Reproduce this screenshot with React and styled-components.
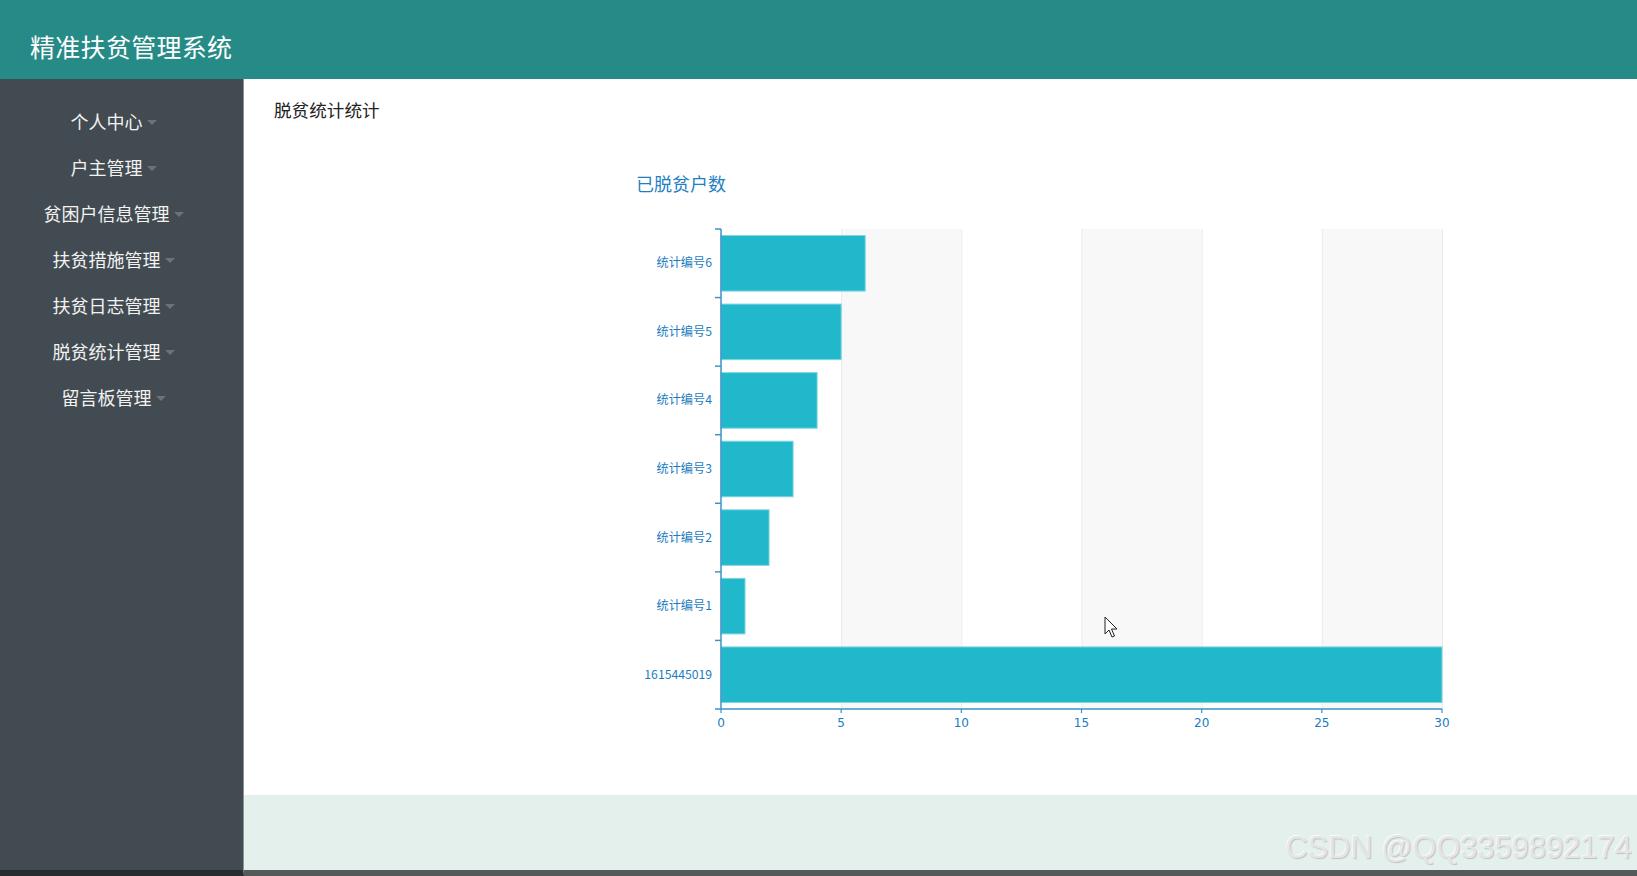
import React from "react";
import styled, { createGlobalStyle } from "styled-components";

const GlobalStyle = createGlobalStyle`
  html, body {
    margin: 0;
    padding: 0;
    overflow: hidden;
  }
  body {
    font-family: "Noto Sans CJK SC", "Noto Sans", sans-serif;
  }
`;

const Page = styled.div`
  width: 100vw;
  height: 100vh;
  display: grid;
  grid-template-rows: 79px 1fr;
`;

const Header = styled.header`
  background: #268a87;
  display: flex;
  align-items: center;
  padding: 12px 0 0 30px;
`;

const Brand = styled.h1`
  margin: 0;
  font-size: 25px;
  font-weight: 400;
  color: #fff;
  letter-spacing: 0.3px;
`;

const Body = styled.div`
  display: grid;
  grid-template-columns: 244px 1fr;
  min-height: 0;
`;

const Sidebar = styled.nav`
  background: #414b51;
  border-bottom: 6px solid #272c2f;
  border-right: 1px solid #8a9396;
  padding: 19px 16px 0 0;
  display: flex;
  flex-direction: column;
`;

const MenuItem = styled.div`
  height: 46px;
  display: flex;
  align-items: center;
  justify-content: center;
  gap: 4px;
  font-size: 18px;
  color: #f2f2f2;
`;

const Caret = styled.span`
  width: 0;
  height: 0;
  border-left: 5px solid transparent;
  border-right: 5px solid transparent;
  border-top: 5px solid #6a7378;
  margin-top: 2px;
`;

const Main = styled.main`
  display: flex;
  flex-direction: column;
  min-height: 0;
`;

const Content = styled.section`
  flex: 1;
  background: #fff;
  padding: 19px 0 0 30px;
`;

const PageTitle = styled.div`
  font-size: 17.6px;
  color: #222;
  line-height: 24px;
`;

const ChartBox = styled.div`
  margin: 49px 0 0 326px;
  width: 900px;
`;

const ChartTitle = styled.div`
  padding-left: 36px;
  font-size: 18px;
  line-height: 24px;
  color: #1f7fc4;
`;

const Footer = styled.footer`
  height: 75px;
  background: #e4f0ec;
  border-bottom: 6px solid #56595a;
  position: relative;
`;

const Watermark = styled.div`
  position: absolute;
  right: 5px;
  bottom: 5px;
  font-family: "Liberation Sans", Arial, sans-serif;
  font-size: 30.5px;
  color: #e4e6e6;
  text-shadow: 1px 1px 1px #bfc2c2, -1px -1px 0 #fafafa;
  letter-spacing: 0.2px;
`;

const menu = [
  "个人中心",
  "户主管理",
  "贫困户信息管理",
  "扶贫措施管理",
  "扶贫日志管理",
  "脱贫统计管理",
  "留言板管理",
];

const data = [
  { name: "统计编号6", value: 6 },
  { name: "统计编号5", value: 5 },
  { name: "统计编号4", value: 4 },
  { name: "统计编号3", value: 3 },
  { name: "统计编号2", value: 2 },
  { name: "统计编号1", value: 1 },
  { name: "1615445019", value: 30 },
];

// plot geometry inside the svg
const X0 = 121;
const X1 = 842;
const Y0 = 29;
const Y1 = 509;
const MAX = 30;
const AXIS = "#3c93c9";
const LABEL = "#1a7cc0";

function BarChart() {
  const band = (Y1 - Y0) / data.length;
  const sx = (v) => X0 + ((X1 - X0) * v) / MAX;
  const ticks = [0, 5, 10, 15, 20, 25, 30];

  return (
    <svg width="900" height="540" style={{ display: "block", marginTop: 5 }}>
      {ticks.slice(0, -1).map((t, i) =>
        i % 2 === 1 ? (
          <rect key={"bg" + t} x={sx(t)} y={Y0} width={sx(5) - X0} height={Y1 - Y0} fill="#f8f8f8" />
        ) : null
      )}
      {ticks.slice(1).map((t) => (
        <line key={"g" + t} x1={sx(t) + 0.5} x2={sx(t) + 0.5} y1={Y0} y2={Y1} stroke="#ebebeb" />
      ))}
      {data.map((d, i) => {
        const top = Y0 + band * i + 6.5;
        const h = band - 13;
        return (
          <g key={d.name}>
            <rect x={X0} y={top} width={sx(d.value) - X0} height={h} fill="#22b8cb" stroke="#7fd6e2" strokeWidth="1" />
            <text x={112} y={Y0 + band * i + band / 2 + 4} textAnchor="end" fontSize="12.2" fill={LABEL}
              fontFamily='"Noto Sans CJK SC", "DejaVu Sans", sans-serif'>
              {d.name}
            </text>
          </g>
        );
      })}
      {data.map((d, i) => (
        <line key={"yt" + i} x1={X0 - 6} x2={X0} y1={Y0 + band * i} y2={Y0 + band * i} stroke={AXIS} strokeWidth="1.5" />
      ))}
      <line x1={X0 - 6} x2={X0} y1={Y1} y2={Y1} stroke={AXIS} strokeWidth="1.5" />
      <line x1={X0} x2={X0} y1={Y0} y2={Y1} stroke={AXIS} strokeWidth="1.5" />
      <line x1={X0} x2={X1} y1={Y1} y2={Y1} stroke={AXIS} strokeWidth="1.5" />
      {ticks.map((t) => (
        <g key={"xt" + t}>
          <line x1={sx(t)} x2={sx(t)} y1={Y1} y2={Y1 + 4} stroke={AXIS} strokeWidth="1.2" />
          <text x={sx(t)} y={Y1 + 18} textAnchor="middle" fontSize="12" fill={LABEL}
            fontFamily='"DejaVu Sans", sans-serif'>
            {t}
          </text>
        </g>
      ))}
      <path
        d="M505 417 L505 434 L509 430 L512 437 L514.5 436 L511.5 429 L517 429 Z"
        fill="#fff"
        stroke="#222"
        strokeWidth="1"
        strokeLinejoin="round"
      />
    </svg>
  );
}

export default function App() {
  return (
    <>
      <GlobalStyle />
      <Page>
        <Header>
          <Brand>精准扶贫管理系统</Brand>
        </Header>
        <Body>
          <Sidebar>
            {menu.map((m) => (
              <MenuItem key={m}>
                {m}
                <Caret />
              </MenuItem>
            ))}
          </Sidebar>
          <Main>
            <Content>
              <PageTitle>脱贫统计统计</PageTitle>
              <ChartBox>
                <ChartTitle>已脱贫户数</ChartTitle>
                <BarChart />
              </ChartBox>
            </Content>
            <Footer>
              <Watermark>CSDN @QQ3359892174</Watermark>
            </Footer>
          </Main>
        </Body>
      </Page>
    </>
  );
}
